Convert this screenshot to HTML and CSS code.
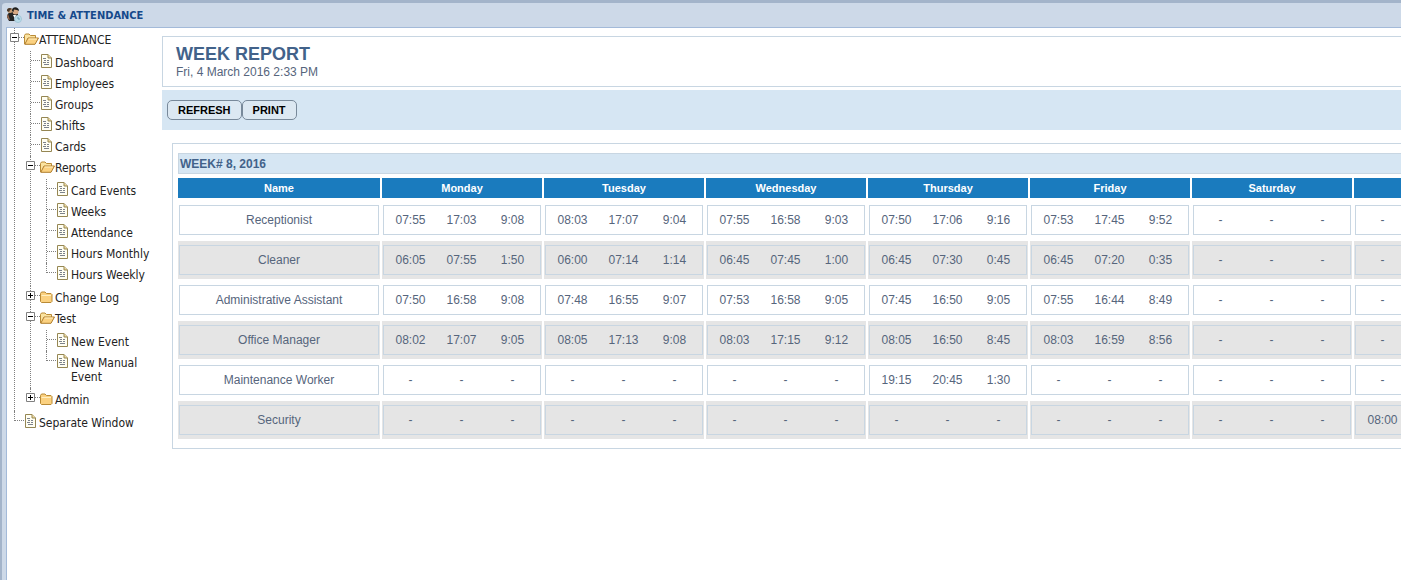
FILE: index.html
```
<!DOCTYPE html>
<html lang="en">
<head>
    <meta charset="utf-8">
    <title>Time &amp; Attendance</title>
    <link rel="stylesheet" href="styles.css">
</head>
<body>
    <svg class="sprites" aria-hidden="true">
        <symbol id="doc" viewBox="0 0 11 14">
            <path d="M.5.5h6.500l3.500 3.500v9.500H.5z" fill="#fffef2" stroke="#958653"/>
            <path d="M7 .5V4h3.500" fill="#f3dda0" stroke="#958653"/>
            <path d="M2 4.500h3M3 6.500h2M6 6.500h2M2 8.500h3M6 8.500h2M3 10.500h5" stroke="#7c828c"/>
        </symbol>
        <symbol id="folder-open" viewBox="0 0 15 12">
            <path d="M.5 11V2.500L1.500 1H5l1.500 1.500h5V5" fill="#fbe3a0" stroke="#b98a35"/>
            <path d="M.8 11.300L4 5h10.500l-3.500 6.300z" fill="#fbd180" stroke="#b07d2c"/>
            <path d="M4.600 6h8.400" stroke="#fff0c2"/>
        </symbol>
        <symbol id="folder" viewBox="0 0 15 12">
            <path d="M.5 10.500V2.500L1.500 1H5l1.500 1.500h4.500l1 1v7l-1 1H1.500z" fill="#fbd180" stroke="#b98a35"/>
            <path d="M1.500 4.500h9.500" stroke="#fff0c2"/>
        </symbol>
        <symbol id="plus" viewBox="0 0 9 9">
            <path d="M.5.5h8v8h-8z" fill="#fff" stroke="#808080"/>
            <path d="M2 4.500h5M4.500 2v5" stroke="#000"/>
        </symbol>
        <symbol id="minus" viewBox="0 0 9 9">
            <path d="M.5.5h8v8h-8z" fill="#fff" stroke="#808080"/>
            <path d="M2 4.500h5" stroke="#000"/>
        </symbol>
    </svg>

    <div class="window">
        <header class="titlebar">
            <svg class="logo" viewBox="0 0 16 16">
                <path d="M5 5c-2 0-4 2-4 5l2 4h8l1-7-3-3z" fill="#242424"/>
                <circle cx="4" cy="3.500" r="2.500" fill="#c59a70"/>
                <path d="M1 4c-.5-3 3-4 5-2l-2 1-1 2z" fill="#4a3a2d"/>
                <circle cx="9.500" cy="4.500" r="3" fill="#d6a882"/>
                <path d="M6 4c-.5-5 7-5 7 0l-2-1-3-.5L7.500 5z" fill="#20201f"/>
                <path d="M7 8l2 4 1-4z" fill="#fff"/>
                <path d="M2 7l2 6-2-1-1-3z" fill="#9b6b50"/>
                <circle cx="12" cy="12" r="3.500" fill="#b9dbe9" stroke="#a4c6d6"/>
                <path d="M12 10v2h2" fill="none" stroke="#6d9bb4"/>
            </svg>
            <span>TIME &amp; ATTENDANCE</span>
        </header>

        <div class="body">
            <nav class="sidebar">
                <ul class="tree">
                    <li>
                        <button class="toggle" aria-label="Collapse"><svg><use href="#minus"/></svg></button>
                        <a href="#"><svg class="folder"><use href="#folder-open"/></svg><span>ATTENDANCE</span></a>
                        <ul>
                            <li><a href="#"><svg class="doc"><use href="#doc"/></svg><span>Dashboard</span></a></li>
                            <li><a href="#"><svg class="doc"><use href="#doc"/></svg><span>Employees</span></a></li>
                            <li><a href="#"><svg class="doc"><use href="#doc"/></svg><span>Groups</span></a></li>
                            <li><a href="#"><svg class="doc"><use href="#doc"/></svg><span>Shifts</span></a></li>
                            <li><a href="#"><svg class="doc"><use href="#doc"/></svg><span>Cards</span></a></li>
                            <li>
                                <button class="toggle" aria-label="Collapse"><svg><use href="#minus"/></svg></button>
                                <a href="#"><svg class="folder"><use href="#folder-open"/></svg><span>Reports</span></a>
                                <ul>
                                    <li><a href="#"><svg class="doc"><use href="#doc"/></svg><span>Card Events</span></a></li>
                                    <li><a href="#"><svg class="doc"><use href="#doc"/></svg><span>Weeks</span></a></li>
                                    <li><a href="#"><svg class="doc"><use href="#doc"/></svg><span>Attendance</span></a></li>
                                    <li><a href="#"><svg class="doc"><use href="#doc"/></svg><span>Hours Monthly</span></a></li>
                                    <li><a href="#"><svg class="doc"><use href="#doc"/></svg><span>Hours Weekly</span></a></li>
                                </ul>
                            </li>
                            <li>
                                <button class="toggle" aria-label="Expand"><svg><use href="#plus"/></svg></button>
                                <a href="#"><svg class="folder"><use href="#folder"/></svg><span>Change Log</span></a>
                            </li>
                            <li>
                                <button class="toggle" aria-label="Collapse"><svg><use href="#minus"/></svg></button>
                                <a href="#"><svg class="folder"><use href="#folder-open"/></svg><span>Test</span></a>
                                <ul>
                                    <li><a href="#"><svg class="doc"><use href="#doc"/></svg><span>New Event</span></a></li>
                                    <li><a href="#"><svg class="doc"><use href="#doc"/></svg><span>New Manual Event</span></a></li>
                                </ul>
                            </li>
                            <li>
                                <button class="toggle" aria-label="Expand"><svg><use href="#plus"/></svg></button>
                                <a href="#"><svg class="folder"><use href="#folder"/></svg><span>Admin</span></a>
                            </li>
                        </ul>
                    </li>
                    <li><a href="#"><svg class="doc"><use href="#doc"/></svg><span>Separate Window</span></a></li>
                </ul>
            </nav>

            <main class="content">
                <div class="page">
                    <div class="heading">
                        <h1>WEEK REPORT</h1>
                        <p>Fri, 4 March 2016 2:33 PM</p>
                    </div>
                    <div class="toolbar">
                        <button>REFRESH</button>
                        <button>PRINT</button>
                    </div>
                    <section class="report">
                        <h2>WEEK# 8, 2016</h2>
                        <table>
                            <thead>
                                <tr>
                                    <th class="name">Name</th>
                                    <th>Monday</th>
                                    <th>Tuesday</th>
                                    <th>Wednesday</th>
                                    <th>Thursday</th>
                                    <th>Friday</th>
                                    <th>Saturday</th>
                                    <th>Sunday</th>
                                </tr>
                            </thead>
                            <tbody id="rows"></tbody>
                        </table>
                    </section>
                </div>
            </main>
        </div>
    </div>

    <script>
        // in, out, total for each day, Monday first
        const week = [
            ['Receptionist', '07:55 17:03 9:08', '08:03 17:07 9:04', '07:55 16:58 9:03', '07:50 17:06 9:16', '07:53 17:45 9:52', '- - -', '- - -'],
            ['Cleaner', '06:05 07:55 1:50', '06:00 07:14 1:14', '06:45 07:45 1:00', '06:45 07:30 0:45', '06:45 07:20 0:35', '- - -', '- - -'],
            ['Administrative Assistant', '07:50 16:58 9:08', '07:48 16:55 9:07', '07:53 16:58 9:05', '07:45 16:50 9:05', '07:55 16:44 8:49', '- - -', '- - -'],
            ['Office Manager', '08:02 17:07 9:05', '08:05 17:13 9:08', '08:03 17:15 9:12', '08:05 16:50 8:45', '08:03 16:59 8:56', '- - -', '- - -'],
            ['Maintenance Worker', '- - -', '- - -', '- - -', '19:15 20:45 1:30', '- - -', '- - -', '- - -'],
            ['Security', '- - -', '- - -', '- - -', '- - -', '- - -', '- - -', '08:00 - -']
        ];

        const rows = document.getElementById('rows');
        week.forEach(([name, ...days]) => {
            const tr = document.createElement('tr');
            tr.innerHTML = `<td><div class="box">${name}</div></td>` + days.map(day => {
                const times = day.split(' ').map(t => `<span>${t}</span>`).join('');
                return `<td><div class="box times">${times}</div></td>`;
            }).join('');
            rows.appendChild(tr);
        });
    </script>
</body>
</html>
```
FILE: styles.css
```
* {
    box-sizing: border-box;
}
body {
    margin: 0;
    background: #a3b4ca;
    font-family: "Liberation Sans", Arial, sans-serif;
    font-size: 12px;
    color: #56657c;
}
ul, h1, h2, p {
    margin: 0;
    padding: 0;
}
.sprites {
    position: absolute;
    width: 0;
    height: 0;
}

/* window frame */
.window {
    display: flex;
    flex-direction: column;
    min-height: 100vh;
    padding-left: 4px;
    background: #cdd9e8;
    border-top: 3px solid #a3b4ca;
    border-left: 2px solid #a3b4ca;
    border-top-left-radius: 6px;
}
.titlebar {
    display: flex;
    align-items: center;
    gap: 5px;
    height: 24px;
    font-family: "DejaVu Sans Condensed", Tahoma, sans-serif;
    font-size: 11px;
    font-weight: bold;
    color: #15498b;
}
.logo {
    width: 16px;
    height: 16px;
}
.body {
    display: flex;
    flex: 1;
    background: #fff;
    border-top: 1px solid #a3bad9;
    border-left: 1px solid #a3bad9;
}

/* navigation tree */
.sidebar {
    flex: none;
    width: 155px;
    font-family: "DejaVu Sans Condensed", Tahoma, sans-serif;
    line-height: 14px;
}
.tree, .tree ul {
    list-style: none;
}
.tree ul {
    margin-left: -1px;
    padding: 2px 0;
}
.tree li {
    position: relative;
    padding-left: 17px;
}
.tree li::before {
    content: "";
    position: absolute;
    top: 0;
    bottom: 0;
    left: 7px;
    border-left: 1px dotted #808080;
}
.tree li:last-child::before {
    bottom: auto;
    height: 10px;
}
.tree li::after {
    content: "";
    position: absolute;
    top: 9px;
    left: 8px;
    width: 9px;
    border-top: 1px dotted #808080;
}
.tree a {
    display: flex;
    padding: 5px 0 2px;
    color: #222;
    text-decoration: none;
}
.tree a svg {
    flex: none;
}
.tree .folder {
    width: 15px;
    height: 12px;
}
.tree .doc {
    width: 11px;
    height: 14px;
    margin: -2px 3px 0 1px;
}
.toggle {
    position: absolute;
    z-index: 1;
    top: 5px;
    left: 3px;
    width: 9px;
    height: 9px;
    padding: 0;
    border: 0;
    background: none;
}
.toggle svg {
    display: block;
    width: 9px;
    height: 9px;
}

/* report page */
.content {
    flex: 1;
    min-width: 0;
    overflow: hidden;
}
.page {
    min-width: max-content;
    padding-top: 8px;
}
.heading {
    height: 51px;
    padding: 7px 13px;
    border: 1px solid #c8d6e2;
}
.heading h1 {
    font-size: 18px;
    line-height: 20px;
    color: #42628a;
}
.heading p {
    line-height: 16px;
}
.toolbar {
    display: flex;
    align-items: center;
    height: 40px;
    margin-top: 3px;
    padding-left: 5px;
    background: #d6e6f3;
}
.toolbar button {
    height: 20px;
    padding: 0 10px;
    border: 1px solid #78899a;
    border-radius: 5px;
    background: #dce8f2;
    font: bold 11px "Liberation Sans", Arial, sans-serif;
    color: #000;
}
.report {
    margin: 13px 10px;
    padding: 9px 5px 7px;
    border: 1px solid #c8d6e2;
}
.report h2 {
    height: 21px;
    padding-left: 1px;
    border: 1px solid #c8d6e2;
    background: #d6e6f3;
    font-size: 12px;
    line-height: 20px;
    color: #42628a;
}
.report table {
    width: 1340px;
    margin: 2px -2px 0;
    border-spacing: 2px;
    table-layout: fixed;
}
.report th {
    height: 21px;
    padding: 0;
    border-bottom: 1px solid #fff;
    background: #1a7bbe;
    font-size: 11px;
    color: #fff;
}
.report .name {
    width: 202px;
}
.report td {
    padding: 4px 1px;
}
.report tr:nth-child(even) td {
    background: #e5e5e5;
}
.box {
    height: 30px;
    border: 1px solid #c8d6e2;
    line-height: 28px;
    text-align: center;
}
.times {
    display: grid;
    grid-template-columns: repeat(3, 51px);
    padding-left: 1px;
}
```
